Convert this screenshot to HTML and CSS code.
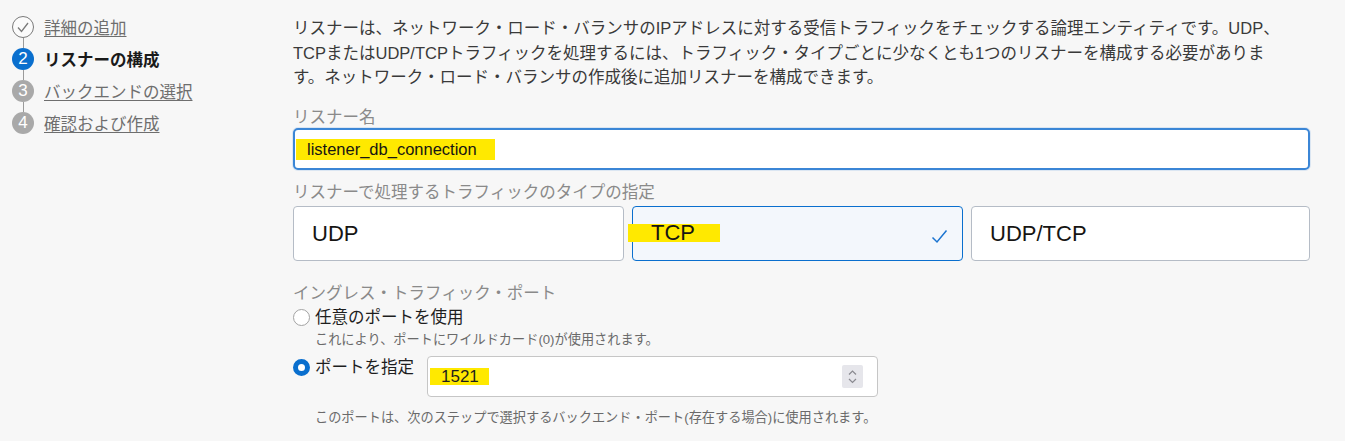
FILE: index.html
```html
<!DOCTYPE html>
<html lang="ja">
<head>
<meta charset="utf-8">
<title>リスナーの構成</title>
<link rel="stylesheet" href="styles.css">
</head>
<body>
<div class="page">
  <nav class="steps">
    <ol class="step-list">
      <li class="step done">
        <span class="dot"><svg width="22" height="22" viewBox="0 0 22 22"><polyline points="6,11.5 9.5,15.5 16,7" fill="none" stroke="#7a7a7a" stroke-width="1.3"/></svg></span>
        <a class="step-link" href="#">詳細の追加</a>
      </li>
      <li class="step current">
        <span class="dot">2</span>
        <span class="step-text">リスナーの構成</span>
      </li>
      <li class="step todo">
        <span class="dot">3</span>
        <a class="step-link" href="#">バックエンドの選択</a>
      </li>
      <li class="step todo">
        <span class="dot">4</span>
        <a class="step-link" href="#">確認および作成</a>
      </li>
    </ol>
  </nav>

  <main class="content">
    <p class="intro">リスナーは、ネットワーク・ロード・バランサのIPアドレスに対する受信トラフィックをチェックする論理エンティティです。UDP、TCPまたはUDP/TCPトラフィックを処理するには、トラフィック・タイプごとに少なくとも1つのリスナーを構成する必要があります。ネットワーク・ロード・バランサの作成後に追加リスナーを構成できます。</p>

    <div class="field field-name">
      <label class="field-label">リスナー名</label>
      <div class="text-input focused"><span class="hl hl-name">listener_db_connection</span></div>
    </div>

    <div class="field field-type">
      <label class="field-label">リスナーで処理するトラフィックのタイプの指定</label>
      <div class="cards">
        <div class="card">UDP</div>
        <div class="card selected"><span class="hl hl-tcp">TCP</span>
          <svg class="check" width="17" height="15" viewBox="0 0 17 15"><polyline points="1.5,8.5 6,13 15.5,1.5" fill="none" stroke="#1b74d0" stroke-width="1.5"/></svg>
        </div>
        <div class="card">UDP/TCP</div>
      </div>
    </div>

    <div class="field field-port">
      <label class="field-label">イングレス・トラフィック・ポート</label>
      <div class="radio-row">
        <span class="radio"></span>
        <span class="radio-label">任意のポートを使用</span>
      </div>
      <div class="help help-any">これにより、ポートにワイルドカード(0)が使用されます。</div>
      <div class="radio-row port-row">
        <div class="radio-choice">
          <span class="radio checked"></span>
          <span class="radio-label">ポートを指定</span>
        </div>
        <div class="number-input">
          <span class="hl hl-port">1521</span>
          <span class="spinner"><svg width="21" height="23" viewBox="0 0 21 23"><polyline points="7,9.5 10.5,6 14,9.5" fill="none" stroke="#8a8a90" stroke-width="1.2"/><polyline points="7,14 10.5,17.5 14,14" fill="none" stroke="#8a8a90" stroke-width="1.2"/></svg></span>
        </div>
      </div>
      <div class="help help-port">このポートは、次のステップで選択するバックエンド・ポート(存在する場合)に使用されます。</div>
    </div>
  </main>
</div>
</body>
</html>
```

FILE: styles.css
```css
html, body {
  margin: 0;
  padding: 0;
}
body {
  background: #f7f7f7;
  font-family: "Liberation Sans", "Noto Sans CJK JP", sans-serif;
  color: #161513;
}
.page {
  display: flex;
  align-items: flex-start;
}

/* Steps */
.steps {
  width: 293px;
  flex: none;
}
.step-list {
  list-style: none;
  margin: 0;
  padding: 11px 0 0 12px;
}
.step {
  position: relative;
  display: flex;
  align-items: center;
  gap: 10px;
  height: 32px;
  font-size: 16.5px;
}
.step + .step::before {
  content: "";
  position: absolute;
  left: 11px;
  top: -5px;
  width: 1px;
  height: 10px;
  background: #9a9a9a;
}
.dot {
  width: 22px;
  height: 22px;
  border-radius: 50%;
  box-sizing: border-box;
  display: flex;
  align-items: center;
  justify-content: center;
  flex: none;
  color: #fff;
  font-size: 17px;
  font-family: "Liberation Sans", sans-serif;
}
.done .dot {
  border: 1px solid #7a7a7a;
  background: #fbfbfb;
}
.done .dot svg {
  margin: -1px;
}
.current .dot {
  background: #0a6fce;
}
.todo .dot {
  background: #a9a9a9;
}
.step-link {
  color: #6e6e6e;
  text-decoration: underline;
  text-underline-offset: 2px;
}
.step-text {
  font-weight: bold;
  color: #1a1a1a;
}

/* Content */
.content {
  width: 1017px;
  padding-top: 16px;
}
.intro {
  margin: 0;
  max-width: 992px;
  font-size: 16.5px;
  line-height: 24.5px;
  color: #3a3a3a;
}
.field-label {
  display: block;
  font-size: 16.5px;
  line-height: 20px;
  color: #8a8a8a;
}
.field-name {
  margin-top: 17.5px;
}
.text-input {
  margin-top: 1px;
  height: 42px;
  box-sizing: border-box;
  border: 2px solid #3b86d6;
  border-radius: 5px;
  background: #fff;
  display: flex;
  align-items: center;
  padding-left: 12px;
  font-size: 16.5px;
  box-shadow: 0 0 0 1px rgba(59, 134, 214, 0.15);
}
.hl {
  background: #ffe900;
}
.hl-name {
  margin-left: -11px;
  padding: 0 18px 0 11px;
  line-height: 21px;
}

.field-type {
  margin-top: 12px;
}
.cards {
  margin-top: 4px;
  display: grid;
  grid-template-columns: 331px 331px 1fr;
  gap: 8px;
}
.card {
  height: 55px;
  box-sizing: border-box;
  border: 1px solid #b5bcc6;
  border-radius: 4px;
  background: #fff;
  display: flex;
  align-items: center;
  padding: 0 14px 0 18px;
  font-size: 22px;
  color: #161513;
}
.card.selected {
  border-color: #0a6fce;
  background: #f3f7fc;
}
.hl-tcp {
  margin-left: -23px;
  padding: 0 25px 0 23px;
  line-height: 18px;
  height: 18px;
  margin-top: -2px;
}
.check {
  margin-left: auto;
  margin-top: 6px;
}

.field-port {
  margin-top: 22px;
}
.radio-row {
  margin-top: 2px;
  display: flex;
  align-items: center;
  gap: 5px;
  font-size: 16.5px;
  line-height: 24px;
  color: #1e1e1e;
}
.radio {
  width: 17px;
  height: 17px;
  box-sizing: border-box;
  border-radius: 50%;
  border: 1px solid #a3a3a3;
  background: #fff;
  flex: none;
}
.radio.checked {
  border: 5.5px solid #0a6fce;
}
.help {
  padding-left: 22px;
  font-size: 13.2px;
  line-height: 18px;
  color: #6a6a6a;
}
.help-any {
  margin-top: 2px;
}
.port-row {
  margin-top: 6px;
  align-items: flex-start;
  gap: 13px;
}
.radio-choice {
  display: flex;
  align-items: center;
  gap: 5px;
}
.number-input {
  margin-top: 1px;
  width: 451px;
  height: 41px;
  box-sizing: border-box;
  border: 1px solid #c6c6c6;
  border-radius: 4px;
  background: #fff;
  display: flex;
  align-items: center;
  padding-left: 13px;
  font-size: 17px;
}
.hl-port {
  margin-left: -11px;
  padding: 0 10px 0 11px;
  line-height: 17px;
}
.spinner {
  margin-left: auto;
  margin-right: 14px;
  width: 21px;
  height: 23px;
  background: #e6e6eb;
  border-radius: 2px;
  display: flex;
}
.help-port {
  margin-top: 12px;
}
```
